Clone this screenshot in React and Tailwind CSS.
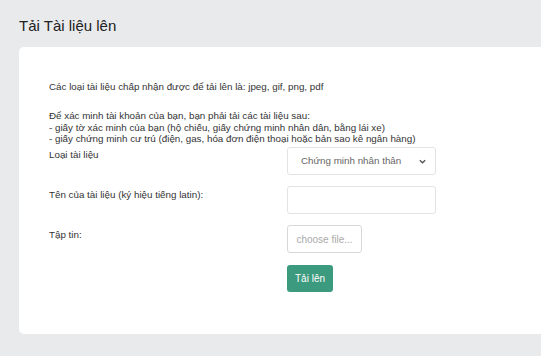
export default function App() {
  return (
    <div
      className="min-h-[356px] bg-[#e9eaec] pl-[19px] pt-[16px] pb-[21px] text-[#333]"
      style={{ fontFamily: '"Liberation Sans", Arial, sans-serif' }}
    >
      <h1 className="text-[15px] leading-[19px] text-[#222] mb-[12px]">Tải Tài liệu lên</h1>

      <div className="bg-white rounded-l-[5px] h-[287px] pl-[30px] pt-[34px]">
        <p className="text-[9.8px] leading-[12px]">
          Các loại tài liệu chấp nhận được để tải lên là: jpeg, gif, png, pdf
        </p>
        <div className="mt-[17px] text-[9.8px] leading-[11.7px]">
          <p>Để xác minh tài khoản của bạn, bạn phải tải các tài liệu sau:</p>
          <p>- giấy tờ xác minh của bạn (hộ chiếu, giấy chứng minh nhân dân, bằng lái xe)</p>
          <p>- giấy chứng minh cư trú (điện, gas, hóa đơn điện thoại hoặc bản sao kê ngân hàng)</p>
        </div>

        <div className="mt-[2px] flex flex-col gap-[11px] text-[9.8px]">
          <div className="flex">
            <label className="w-[238px] pt-[1px]">Loại tài liệu</label>
            <div className="w-[149px] h-[28px] border border-[#e3e3e3] rounded-[3px] flex items-center justify-between pl-[13px] pr-[8px] text-[#666]">
              <span>Chứng minh nhân thân</span>
              <svg width="9" height="9" viewBox="0 0 10 10" fill="none" stroke="#555" strokeWidth="1.5">
                <path d="M2 3.5 L5 6.5 L8 3.5" />
              </svg>
            </div>
          </div>
          <div className="flex">
            <label className="w-[238px] pt-[2px]">Tên của tài liệu (ký hiệu tiếng latin):</label>
            <div className="w-[149px] h-[28px] border border-[#e3e3e3] rounded-[3px]" />
          </div>
          <div className="flex">
            <label className="w-[238px] pt-[3px]">Tập tin:</label>
            <div className="w-[75px] h-[28px] border border-[#d8d8d8] rounded-[3px] flex items-center justify-center text-[#aaa] text-[10px]">
              choose file...
            </div>
          </div>
          <div className="flex">
            <div className="w-[238px]" />
            <button className="w-[46px] h-[27px] mt-[1px] rounded-[3px] bg-[#3c9a7e] text-white text-[10px]">
              Tải lên
            </button>
          </div>
        </div>
      </div>
    </div>
  );
}
